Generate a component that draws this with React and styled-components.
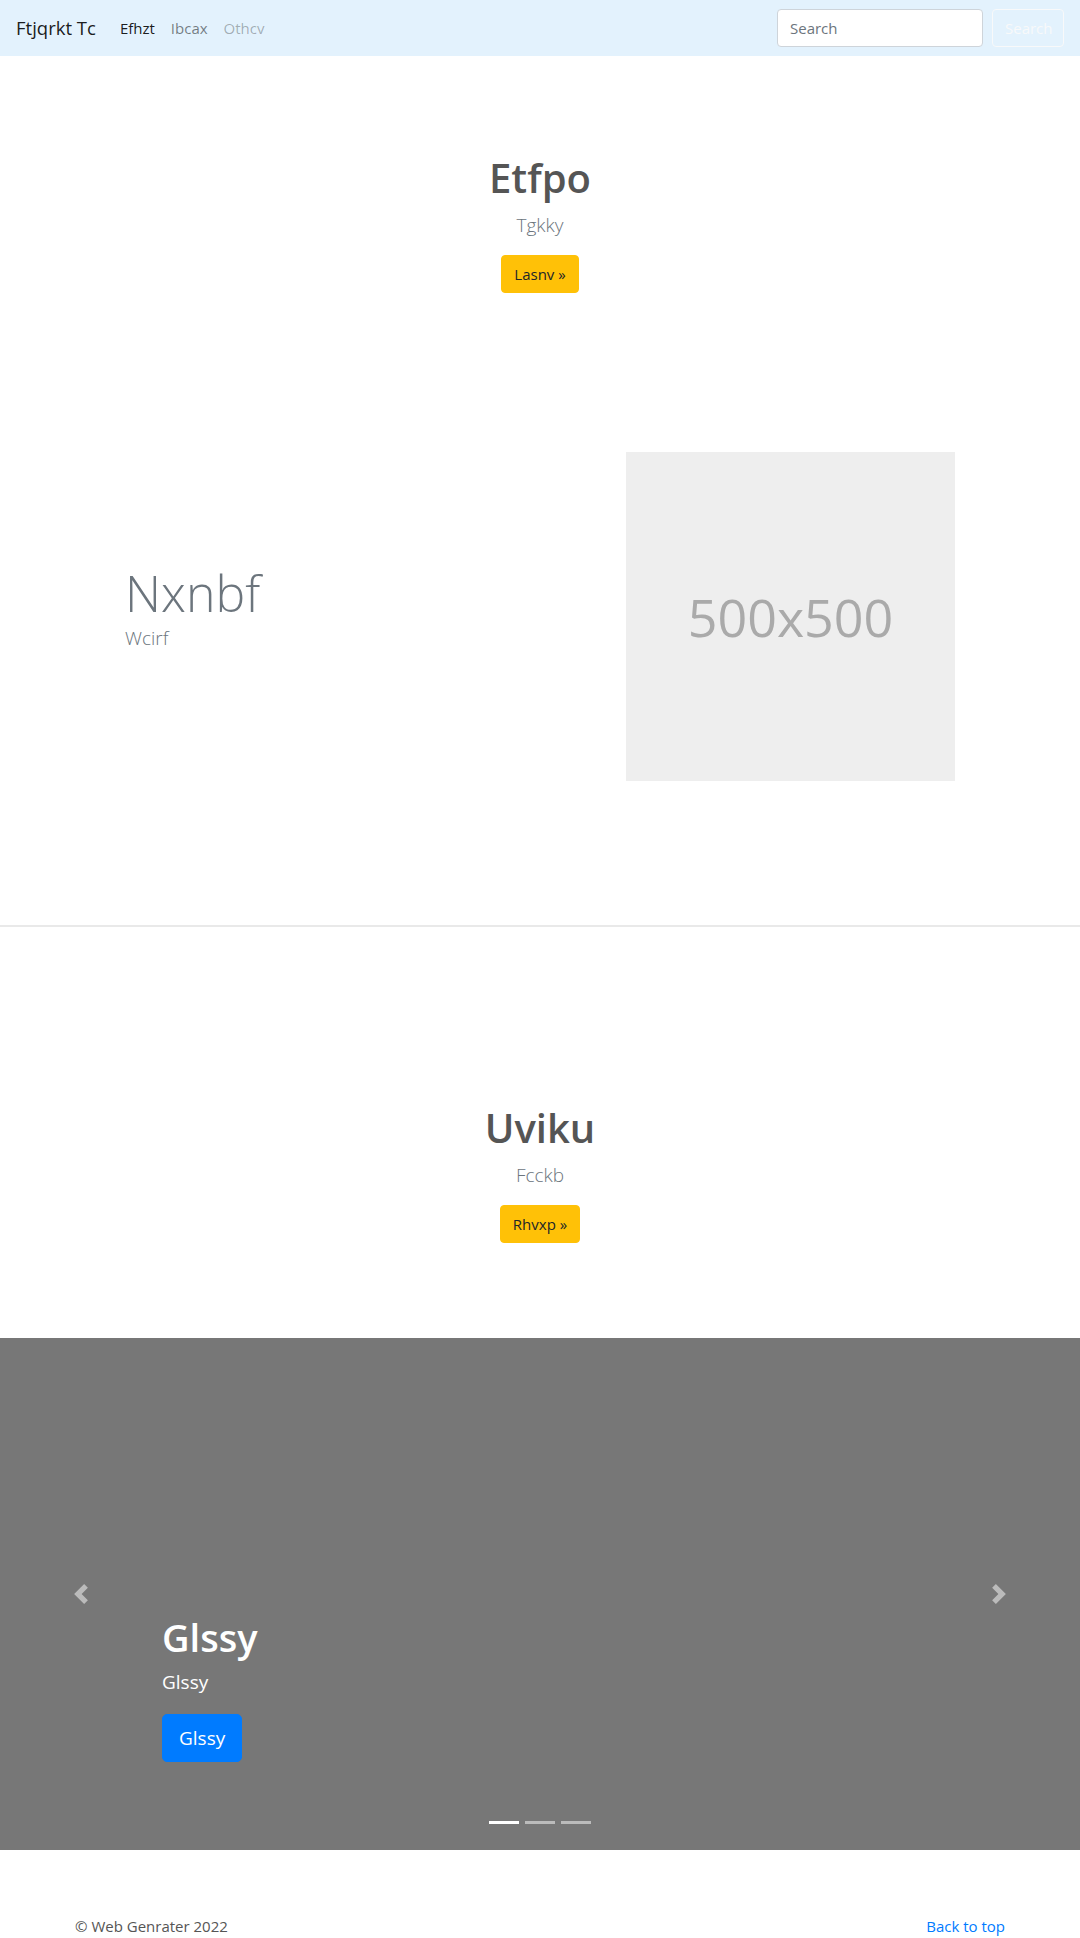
import React from "react";
import styled, { createGlobalStyle } from "styled-components";

const GlobalStyle = createGlobalStyle`
  * {
    box-sizing: border-box;
  }

  body {
    margin: 0;
    font-family: "Open Sans", "Liberation Sans", sans-serif;
    font-size: 16px;
    line-height: 1.5;
    color: #212529;
    background: #fff;
  }
`;

const navItems = [
  { label: "Efhzt", state: "active" },
  { label: "Ibcax", state: "normal" },
  { label: "Othcv", state: "disabled" },
];

const linkColors = {
  active: "rgba(0, 0, 0, 0.9)",
  normal: "rgba(0, 0, 0, 0.5)",
  disabled: "rgba(0, 0, 0, 0.3)",
};

function App() {
  return (
    <>
      <GlobalStyle />
      <Navbar>
        <Brand href="#">Ftjqrkt Tc</Brand>
        <NavList>
          {navItems.map((item) => (
            <li key={item.label}>
              <NavLink href="#" $state={item.state}>
                {item.label}
              </NavLink>
            </li>
          ))}
        </NavList>
        <SearchForm onSubmit={(e) => e.preventDefault()}>
          <SearchInput type="text" placeholder="Search" />
          <SearchButton type="submit">Search</SearchButton>
        </SearchForm>
      </Navbar>

      <Hero $top={98} $bottom={95}>
        <HeroTitle>Etfpo</HeroTitle>
        <HeroLead>Tgkky</HeroLead>
        <YellowButton href="#">Lasnv »</YellowButton>
      </Hero>

      <Feature>
        <FeatureText>
          <FeatureTitle>Nxnbf</FeatureTitle>
          <FeatureLead>Wcirf</FeatureLead>
        </FeatureText>
        <Placeholder>500x500</Placeholder>
      </Feature>

      <Divider />

      <Hero $top={177} $bottom={95}>
        <HeroTitle>Uviku</HeroTitle>
        <HeroLead>Fcckb</HeroLead>
        <YellowButton href="#">Rhvxp »</YellowButton>
      </Hero>

      <Carousel>
        <Control $side="left" href="#">
          <svg width="20" height="20" viewBox="0 0 8 8" fill="#fff">
            <path d="M5.25 0l-4 4 4 4 1.5-1.5L4.25 4l2.5-2.5L5.25 0z" />
          </svg>
        </Control>
        <Caption>
          <CaptionTitle>Glssy</CaptionTitle>
          <CaptionText>Glssy</CaptionText>
          <BlueButton href="#">Glssy</BlueButton>
        </Caption>
        <Control $side="right" href="#">
          <svg width="20" height="20" viewBox="0 0 8 8" fill="#fff">
            <path d="M2.75 0l-1.5 1.5L3.75 4l-2.5 2.5L2.75 8l4-4-4-4z" />
          </svg>
        </Control>
        <Indicators>
          {[0, 1, 2].map((i) => (
            <Indicator key={i} $active={i === 0} />
          ))}
        </Indicators>
      </Carousel>

      <Footer>
        <span>© Web Genrater 2022</span>
        <FooterLink href="#">Back to top</FooterLink>
      </Footer>
    </>
  );
}

export default App;

const Navbar = styled.nav`
  display: flex;
  align-items: center;
  height: 56px;
  padding: 8px 16px;
  background-color: #e3f2fd;
`;

const Brand = styled.a`
  margin-right: 16px;
  font-size: 18.5px;
  line-height: 30px;
  color: rgba(0, 0, 0, 0.9);
  text-decoration: none;
`;

const NavList = styled.ul`
  display: flex;
  margin: 0;
  padding: 0;
  list-style: none;
`;

const NavLink = styled.a`
  display: block;
  padding: 8px;
  font-size: 15px;
  color: ${(props) => linkColors[props.$state]};
  text-decoration: none;
`;

const SearchForm = styled.form`
  display: flex;
  margin-left: auto;
`;

const SearchInput = styled.input`
  width: 206px;
  height: 38px;
  margin-right: 9px;
  padding: 6px 12px;
  font-family: inherit;
  font-size: 15px;
  color: #495057;
  background: #fff;
  border: 1px solid #ced4da;
  border-radius: 4px;

  &::placeholder {
    color: #6c757d;
  }
`;

const SearchButton = styled.button`
  width: 72px;
  height: 38px;
  padding: 6px 12px;
  font-family: inherit;
  font-size: 15px;
  color: #f8f9fa;
  background: transparent;
  border: 1px solid #f8f9fa;
  border-radius: 4px;
`;

const Hero = styled.section`
  display: flex;
  flex-direction: column;
  align-items: center;
  padding: ${(props) => props.$top}px 0 ${(props) => props.$bottom}px;
  text-align: center;
`;

const HeroTitle = styled.h1`
  margin: 0 0 8px;
  font-size: 40px;
  font-weight: 600;
  line-height: 48px;
  color: #555;
`;

const HeroLead = styled.p`
  margin: 0 0 15px;
  font-size: 19px;
  font-weight: 300;
  line-height: 30px;
  color: #6c757d;
`;

const YellowButton = styled.a`
  display: inline-block;
  padding: 6px 12px;
  font-size: 15px;
  line-height: 24px;
  color: #212529;
  text-decoration: none;
  background-color: #ffc107;
  border: 1px solid #ffc107;
  border-radius: 4px;
`;

const Feature = styled.section`
  display: flex;
  align-items: center;
  justify-content: space-between;
  padding: 64px 125px 144px;
`;

const FeatureText = styled.div`
  display: flex;
  flex-direction: column;
  padding-bottom: 18px;
`;

const FeatureTitle = styled.h2`
  margin: 0;
  font-size: 50px;
  font-weight: 300;
  line-height: 1.2;
  color: #6c757d;
`;

const FeatureLead = styled.p`
  margin: 0;
  font-size: 19px;
  font-weight: 300;
  line-height: 30px;
  color: #6c757d;
`;

const Placeholder = styled.div`
  display: flex;
  align-items: center;
  justify-content: center;
  width: 329px;
  height: 329px;
  font-size: 52px;
  color: #aaa;
  background-color: #eee;
`;

const Divider = styled.hr`
  margin: 0;
  border: 0;
  border-top: 2px solid #e9e9e9;
`;

const Carousel = styled.div`
  position: relative;
  height: 512px;
  background-color: #777;
`;

const Control = styled.a`
  position: absolute;
  top: 0;
  bottom: 0;
  ${(props) => props.$side}: 0;
  display: flex;
  align-items: center;
  justify-content: center;
  width: 15%;
  opacity: 0.5;
`;

const Caption = styled.div`
  position: absolute;
  left: 15%;
  right: 15%;
  bottom: 48px;
  padding-bottom: 40px;
  color: #fff;
  text-align: left;
`;

const CaptionTitle = styled.h1`
  margin: 0 0 8px;
  font-size: 38px;
  font-weight: 600;
  line-height: 46px;
`;

const CaptionText = styled.p`
  margin: 0 0 18px;
  font-size: 19px;
  line-height: 28px;
`;

const BlueButton = styled.a`
  display: inline-block;
  padding: 8px 16px;
  font-size: 19px;
  line-height: 30px;
  color: #fff;
  text-decoration: none;
  background-color: #007bff;
  border: 1px solid #007bff;
  border-radius: 5px;
`;

const Indicators = styled.ol`
  position: absolute;
  left: 0;
  right: 0;
  bottom: 26px;
  display: flex;
  justify-content: center;
  gap: 6px;
  margin: 0;
  padding: 0;
  list-style: none;
`;

const Indicator = styled.li`
  width: 30px;
  height: 3px;
  background-color: #fff;
  opacity: ${(props) => (props.$active ? 1 : 0.5)};
`;

const Footer = styled.footer`
  display: flex;
  justify-content: space-between;
  width: 960px;
  margin: 0 auto;
  padding: 65px 15px 48px;
  font-size: 15px;
  color: #555;
`;

const FooterLink = styled.a`
  color: #007bff;
  text-decoration: none;
`;
